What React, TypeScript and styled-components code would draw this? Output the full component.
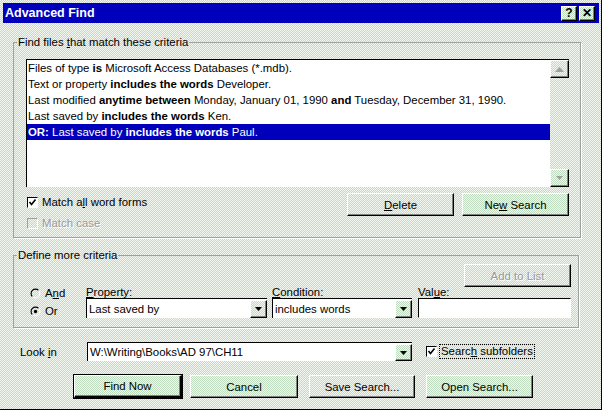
import React from "react";
import styled, { createGlobalStyle, css } from "styled-components";

const Global = createGlobalStyle`
  html, body { margin: 0; padding: 0; background: #fff; }
  body { font-family: "Liberation Sans", Arial, sans-serif; font-size: 11.4px; color: #000; }
`;

const dither = css`
  background-color: #d8e8d4;
  background-image: repeating-conic-gradient(#c0dcc0 0% 25%, #f2f7f0 0% 50%);
  background-size: 2px 2px;
`;

const raised = css`
  border-top: 1px solid #fff;
  border-left: 1px solid #fff;
  border-right: 1px solid #000;
  border-bottom: 1px solid #000;
  box-shadow: inset -1px -1px #808080;
`;

const Window = styled.div`
  ${dither}
  width: 602px;
  height: 410px;
  box-sizing: border-box;
  border-right: 1px solid #000;
  border-bottom: 1px solid #000;
  padding: 3px 2px 0 3px;
  display: flex;
  flex-direction: column;
`;

const TitleBar = styled.div`
  height: 20px;
  background: #0000bc;
  color: #fff;
  display: flex;
  align-items: center;
  justify-content: space-between;
  padding: 0 4px 0 2px;
`;

const Title = styled.span`
  font-weight: bold;
  font-size: 12.5px;
`;

const TitleButtons = styled.div`
  display: flex;
  gap: 2px;
`;

const TitleButton = styled.div`
  ${dither}
  ${raised}
  width: 16px;
  height: 15px;
  box-sizing: border-box;
  display: flex;
  align-items: center;
  justify-content: center;
  color: #000;
  font-weight: bold;
  font-size: 12px;
  line-height: 1;
`;

const Content = styled.div`
  display: flex;
  flex-direction: column;
  padding-left: 10px;
`;

const Group = styled.fieldset<{ $w: number; $mt: number }>`
  margin: ${(p) => p.$mt}px 0 0 0;
  padding: 0;
  min-width: 0;
  width: ${(p) => p.$w}px;
  box-sizing: border-box;
  border: 1px solid #a0a0a0;
  box-shadow: 1px 1px 0 #fff;
`;

const Legend = styled.legend`
  padding: 0 1px;
  margin-left: 3px;
  line-height: 13px;
`;

const GroupBody = styled.div<{ $pad: string }>`
  padding: ${(p) => p.$pad};
  display: flex;
  flex-direction: column;
`;

const ListBox = styled.div`
  height: 128px;
  box-sizing: border-box;
  background: #fff;
  border-top: 1px solid #000;
  border-left: 1px solid #000;
  display: flex;
`;

const Items = styled.div`
  flex: 1;
  display: flex;
  flex-direction: column;
`;

const Item = styled.div<{ $sel?: boolean }>`
  height: 16px;
  line-height: 16px;
  padding-left: 1px;
  white-space: nowrap;
  background: ${(p) => (p.$sel ? "#0000bc" : "transparent")};
  color: ${(p) => (p.$sel ? "#fff" : "#000")};
`;

const ScrollBar = styled.div`
  ${dither}
  width: 19px;
  display: flex;
  flex-direction: column;
  justify-content: space-between;
`;

const ScrollButton = styled.div`
  ${dither}
  ${raised}
  width: 19px;
  height: 18px;
  box-sizing: border-box;
  display: flex;
  align-items: center;
  justify-content: center;
`;

const OptionsRow = styled.div`
  display: flex;
  justify-content: space-between;
  margin-top: 6px;
`;

const CheckColumn = styled.div`
  display: flex;
  flex-direction: column;
  gap: 7px;
  padding: 2px 0 0 1px;
`;

const CheckRow = styled.label<{ $disabled?: boolean }>`
  display: flex;
  align-items: center;
  gap: 4px;
  height: 14px;
  white-space: nowrap;
  color: ${(p) => (p.$disabled ? "#9a9a9a" : "#000")};
  text-shadow: ${(p) => (p.$disabled ? "1px 1px 0 #fff" : "none")};
`;

const Box = styled.span<{ $disabled?: boolean }>`
  width: 11px;
  height: 11px;
  box-sizing: border-box;
  background: ${(p) => (p.$disabled ? "transparent" : "#fff")};
  border-top: 1px solid ${(p) => (p.$disabled ? "#a0a0a0" : "#000")};
  border-left: 1px solid ${(p) => (p.$disabled ? "#a0a0a0" : "#000")};
  border-right: 1px solid #fff;
  border-bottom: 1px solid #fff;
  display: flex;
  align-items: center;
  justify-content: center;
`;

const ButtonRow = styled.div<{ $gap: number }>`
  display: flex;
  gap: ${(p) => p.$gap}px;
`;

const Button = styled.div<{ $w: number; $ml?: number; $default?: boolean; $disabled?: boolean }>`
  ${dither}
  ${raised}
  width: ${(p) => p.$w}px;
  margin-left: ${(p) => p.$ml ?? 0}px;
  height: 23px;
  box-sizing: border-box;
  display: flex;
  align-items: center;
  justify-content: center;
  white-space: nowrap;
  color: ${(p) => (p.$disabled ? "#9a9a9a" : "#000")};
  text-shadow: ${(p) => (p.$disabled ? "1px 1px 0 #fff" : "none")};
  ${(p) =>
    p.$default &&
    css`
      outline: 1px solid #000;
      outline-offset: 0;
      border-right-width: 2px;
      border-bottom-width: 2px;
    `}
`;

const AddRow = styled.div`
  display: flex;
  justify-content: flex-end;
`;

const FieldsRow = styled.div`
  display: flex;
  align-items: flex-start;
  padding-left: 16px;
`;

const RadioColumn = styled.div`
  width: 56px;
  display: flex;
  flex-direction: column;
  gap: 6px;
`;

const RadioRow = styled.label`
  display: flex;
  align-items: center;
  gap: 4px;
  height: 12px;
`;

const Field = styled.div<{ $w: number; $ml: number }>`
  width: ${(p) => p.$w}px;
  margin-left: ${(p) => p.$ml}px;
  display: flex;
  flex-direction: column;
`;

const FieldLabel = styled.span`
  height: 11px;
  line-height: 11px;
`;

const Combo = styled.div<{ $h: number; $w?: number }>`
  height: ${(p) => p.$h}px;
  ${(p) => (p.$w ? `width: ${p.$w}px;` : "")}
  box-sizing: border-box;
  background: #fff;
  border-top: 1px solid #000;
  border-left: 1px solid #000;
  display: flex;
  align-items: stretch;
`;

const TextInput = styled.div`
  height: 20px;
  box-sizing: border-box;
  background: #fff;
  border-top: 1px solid #000;
  border-left: 1px solid #000;
  border-right: 1px solid #fff;
  border-bottom: 1px solid #fff;
`;

const ComboText = styled.span`
  flex: 1;
  padding-left: 2px;
  display: flex;
  align-items: center;
  white-space: nowrap;
  overflow: hidden;
`;

const DropButton = styled.div`
  ${dither}
  ${raised}
  width: 17px;
  margin-top: 1px;
  box-sizing: border-box;
  display: flex;
  align-items: center;
  justify-content: center;
`;

const LookRow = styled.div`
  display: flex;
  align-items: center;
  margin-top: 14px;
  padding-left: 7px;
`;

const LookLabel = styled.span`
  width: 67px;
`;

const SubCheck = styled.label`
  display: flex;
  align-items: center;
  gap: 2px;
  margin-left: 14px;
`;

const Focus = styled.span`
  border: 1px dotted #000;
  padding: 0 1px;
  line-height: 13px;
  white-space: nowrap;
`;

const BottomButtons = styled(ButtonRow)`
  margin-top: 14px;
  padding-left: 61px;
`;

const U = styled.span`
  text-decoration: underline;
`;

const Down = ({ color = "#000" }: { color?: string }) => (
  <svg width="7" height="4" viewBox="0 0 7 4">
    <polygon points="0,0 7,0 3.5,4" fill={color} />
  </svg>
);

const Up = ({ color = "#000" }: { color?: string }) => (
  <svg width="9" height="5" viewBox="0 0 9 5">
    <polygon points="0,5 9,5 4.5,0" fill={color} />
  </svg>
);

const Check = () => (
  <svg width="9" height="9" viewBox="0 0 9 9">
    <path d="M1.5 4 L3.5 6.5 L7.5 1.5" stroke="#000" strokeWidth="1.6" fill="none" />
  </svg>
);

const Radio = ({ on }: { on?: boolean }) => (
  <svg width="11" height="11" viewBox="0 0 12 12">
    <path d="M2.6 9.4 A4.8 4.8 0 0 1 9.4 2.6" stroke="#000" strokeWidth="1.2" fill="none" />
    <path d="M9.4 2.6 A4.8 4.8 0 0 1 2.6 9.4" stroke="#fff" strokeWidth="1.2" fill="none" />
    {on && <circle cx="6" cy="6" r="1.8" fill="#000" />}
  </svg>
);

type Seg = [string, boolean];
const rows: Seg[][] = [
  [["Files of type ", false], ["is", true], [" Microsoft Access Databases (*.mdb).", false]],
  [["Text or property ", false], ["includes the words", true], [" Developer.", false]],
  [
    ["Last modified ", false],
    ["anytime between", true],
    [" Monday, January 01, 1990 ", false],
    ["and", true],
    [" Tuesday, December 31, 1990.", false],
  ],
  [["Last saved by ", false], ["includes the words", true], [" Ken.", false]],
  [["OR:", true], [" Last saved by ", false], ["includes the words", true], [" Paul.", false]],
];

export default function App() {
  return (
    <>
      <Global />
      <Window>
        <TitleBar>
          <Title>Advanced Find</Title>
          <TitleButtons>
            <TitleButton>?</TitleButton>
            <TitleButton>✕</TitleButton>
          </TitleButtons>
        </TitleBar>
        <Content>
          <Group $w={568} $mt={13}>
            <Legend>
              Find files <U>t</U>hat match these criteria
            </Legend>
            <GroupBody $pad="10px 11px 7px 12px">
              <ListBox>
                <Items>
                  {rows.map((r, i) => (
                    <Item key={i} $sel={i === 4}>
                      {r.map(([t, b], j) => (b ? <b key={j}>{t}</b> : <span key={j}>{t}</span>))}
                    </Item>
                  ))}
                </Items>
                <ScrollBar>
                  <ScrollButton>
                    <Up color="#a0a0a0" />
                  </ScrollButton>
                  <ScrollButton>
                    <Down color="#a0a0a0" />
                  </ScrollButton>
                </ScrollBar>
              </ListBox>
              <OptionsRow>
                <CheckColumn>
                  <CheckRow>
                    <Box>
                      <Check />
                    </Box>
                    <span>
                      Match a<U>l</U>l word forms
                    </span>
                  </CheckRow>
                  <CheckRow $disabled>
                    <Box $disabled />
                    <span>Match case</span>
                  </CheckRow>
                </CheckColumn>
                <ButtonRow $gap={8}>
                  <Button $w={107}>
                    <span>
                      <U>D</U>elete
                    </span>
                  </Button>
                  <Button $w={107}>
                    <span>
                      Ne<U>w</U> Search
                    </span>
                  </Button>
                </ButtonRow>
              </OptionsRow>
            </GroupBody>
          </Group>

          <Group $w={566} $mt={11}>
            <Legend>Define more criteria</Legend>
            <GroupBody $pad="2px 7px 9px 0">
              <AddRow>
                <Button $w={107} $disabled>
                  Add to List
                </Button>
              </AddRow>
              <FieldsRow>
                <RadioColumn>
                  <RadioRow>
                    <Radio />
                    <span>
                      A<U>n</U>d
                    </span>
                  </RadioRow>
                  <RadioRow>
                    <Radio on />
                    <span>Or</span>
                  </RadioRow>
                </RadioColumn>
                <Field $w={181} $ml={0}>
                  <FieldLabel>
                    <U>P</U>roperty:
                  </FieldLabel>
                  <Combo $h={20}>
                    <ComboText>Last saved by</ComboText>
                    <DropButton>
                      <Down />
                    </DropButton>
                  </Combo>
                </Field>
                <Field $w={140} $ml={5}>
                  <FieldLabel>
                    <U>C</U>ondition:
                  </FieldLabel>
                  <Combo $h={20}>
                    <ComboText>includes words</ComboText>
                    <DropButton>
                      <Down />
                    </DropButton>
                  </Combo>
                </Field>
                <Field $w={153} $ml={6}>
                  <FieldLabel>
                    Val<U>u</U>e:
                  </FieldLabel>
                  <TextInput />
                </Field>
              </FieldsRow>
            </GroupBody>
          </Group>

          <LookRow>
            <LookLabel>
              Look <U>i</U>n
            </LookLabel>
            <Combo $h={19} $w={325}>
              <ComboText>W:\Writing\Books\AD 97\CH11</ComboText>
              <DropButton>
                <Down />
              </DropButton>
            </Combo>
            <SubCheck>
              <Box>
                <Check />
              </Box>
              <Focus>
                Searc<U>h</U> subfolders
              </Focus>
            </SubCheck>
          </LookRow>

          <BottomButtons $gap={8}>
            <Button $w={108} $default>
              Find Now
            </Button>
            <Button $w={108}>Cancel</Button>
            <Button $w={106} $ml={3}>
              Save Search...
            </Button>
            <Button $w={107} $ml={3}>
              Open Search...
            </Button>
          </BottomButtons>
        </Content>
      </Window>
    </>
  );
}
